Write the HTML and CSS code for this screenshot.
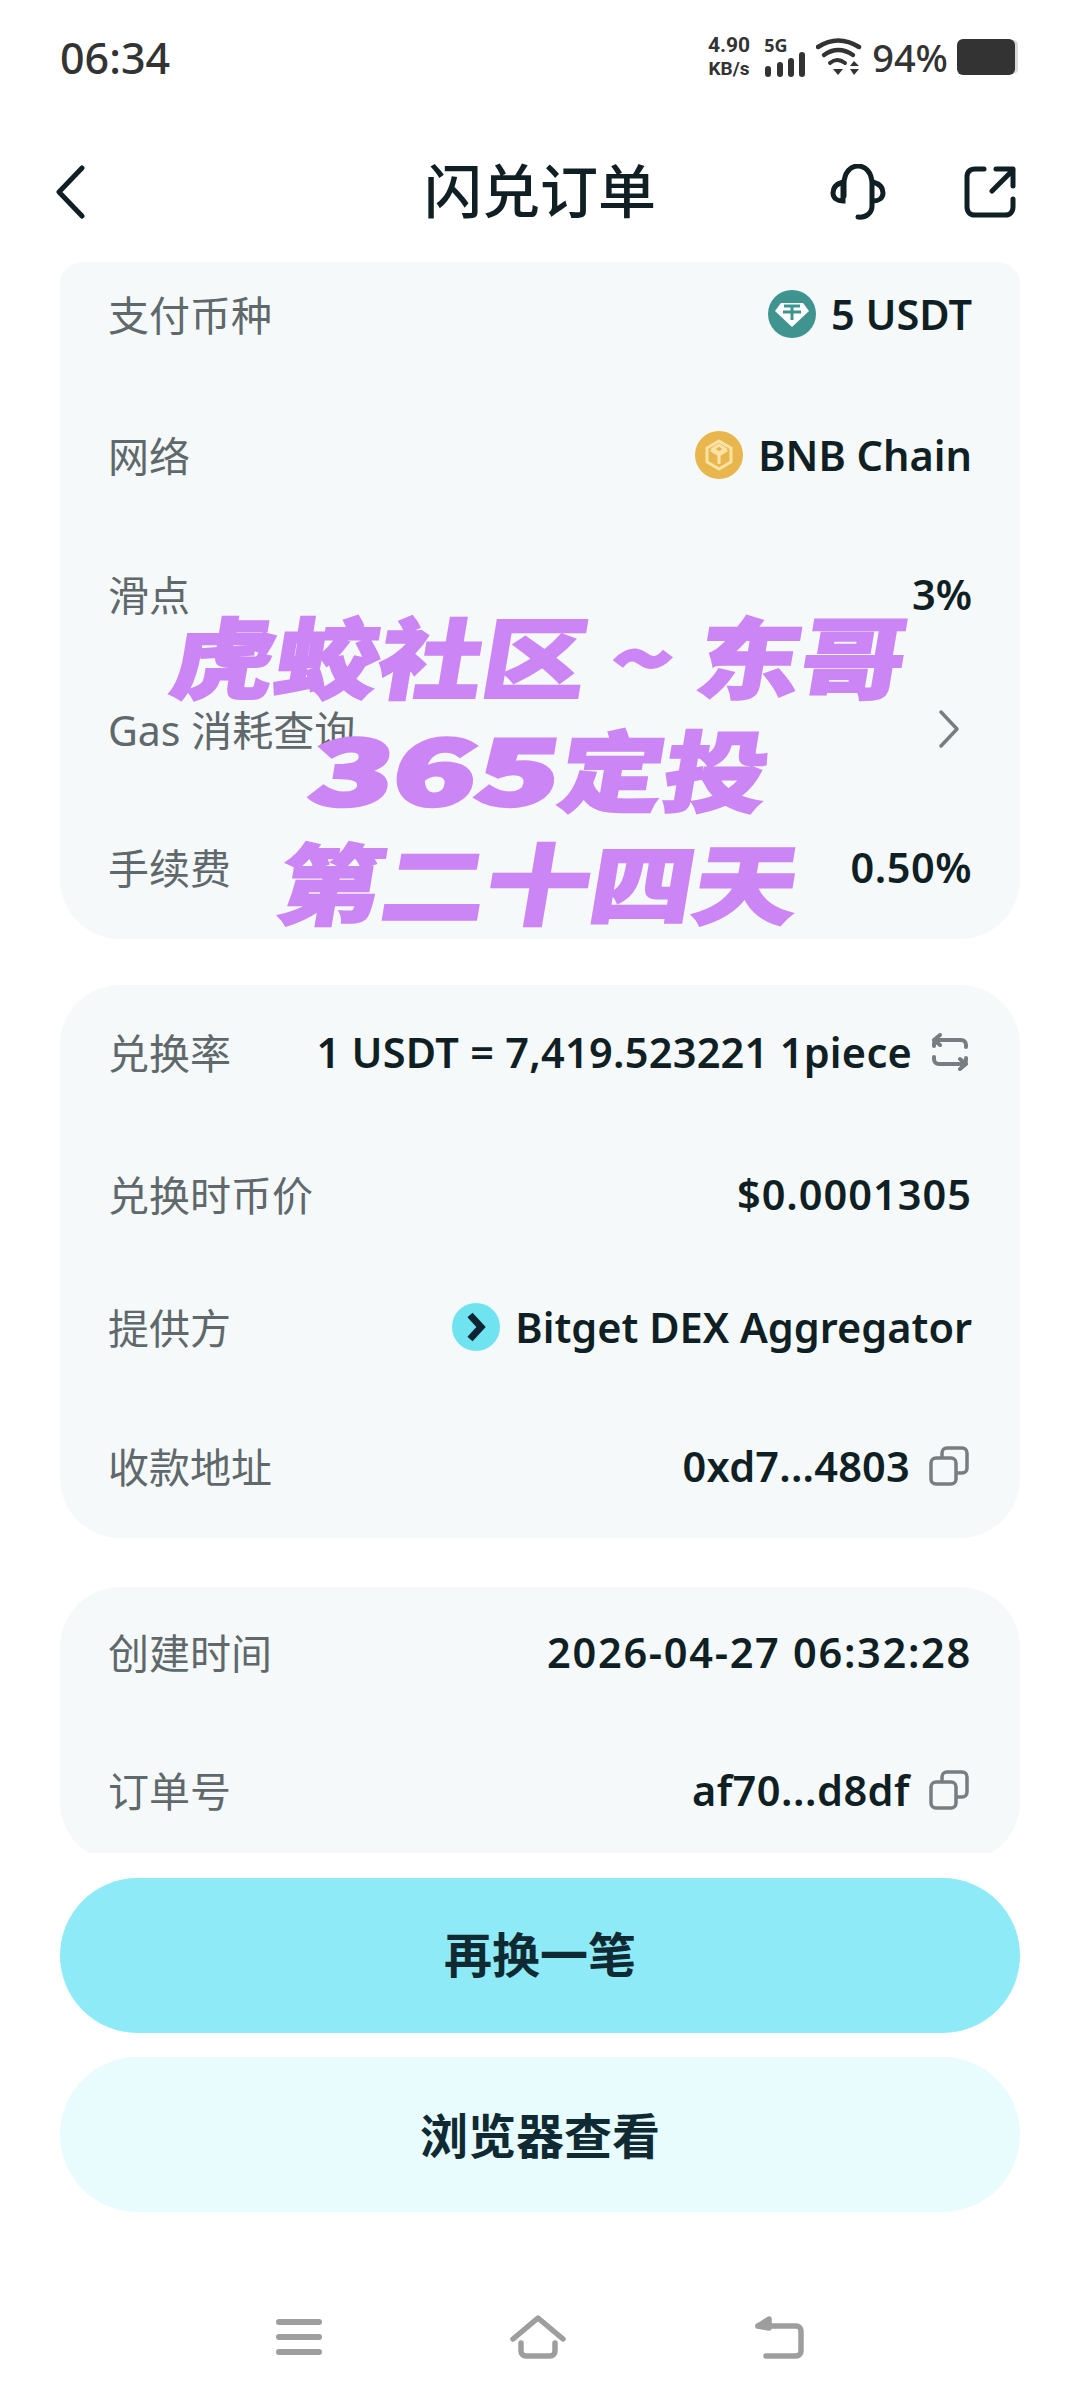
FILE: index.html
```html
<!DOCTYPE html>
<html lang="zh-CN">
<head>
    <meta charset="UTF-8">
    <meta name="viewport" content="width=device-width, initial-scale=1.0">
    <title>闪兑订单</title>
    <link rel="stylesheet" href="styles.css">
</head>
<body>
    <div class="phone">
        <div class="status-bar">
            <div class="status-time">06:34</div>
            <div class="status-icons">
                <div class="net-speed"><span>4.90</span><span class="net-unit">KB/s</span></div>
                <div class="net-signal">
                    <span class="net-type">5G</span>
                    <svg class="signal-icon" width="42" height="25" viewBox="0 0 42 25">
                        <rect x="1" y="14" width="6" height="11" rx="3"/>
                        <rect x="13" y="10" width="6" height="15" rx="3"/>
                        <rect x="24" y="6" width="6" height="19" rx="3"/>
                        <rect x="35" y="0" width="6" height="25" rx="3"/>
                    </svg>
                </div>
                <svg class="wifi-icon" width="46" height="38" viewBox="0 0 46 38" fill="none" stroke="#333" stroke-width="4.5" stroke-linecap="round">
                    <path d="M2 9Q22 -4 43 9"/>
                    <path d="M8 17Q22 7 37 17"/>
                    <path d="M14 25Q21 19 29 25" stroke-width="4"/>
                    <path d="M17 31H27L22 37Z" fill="#333" stroke="none"/>
                    <path d="M34 28L38 23L43 28Z M34 31H43L38 37Z" fill="#333" stroke="none"/>
                </svg>
                <span class="battery-text">94%</span>
                <div class="battery"></div>
            </div>
        </div>

        <div class="nav-header">
            <svg class="back-icon" width="30" height="54" viewBox="0 0 30 54" fill="none" stroke="#0f1f24" stroke-width="5" stroke-linecap="round" stroke-linejoin="round">
                <path d="M27 3L4 27L27 51"/>
            </svg>
            <h1 class="page-title">闪兑订单</h1>
            <div class="header-actions">
                <svg width="56" height="56" viewBox="0 0 56 56" fill="none" stroke="#0f1f24" stroke-width="5" stroke-linecap="round">
                    <path d="M14 32V20C14 8 21 2 28 2C35 2 42 8 42 20V42C42 49 36 54 28 53"/>
                    <path d="M13 18C6 20 3 24 3 29C3 34 7 37 13 37Z"/>
                    <path d="M43 18C50 20 53 24 53 29C53 34 49 37 43 37"/>
                </svg>
                <svg width="52" height="52" viewBox="0 0 52 52" fill="none" stroke="#0f1f24" stroke-width="5" stroke-linecap="round" stroke-linejoin="round">
                    <path d="M20 3H11C6 3 3 6 3 11V41C3 46 6 49 11 49H41C46 49 49 46 49 41V33"/>
                    <path d="M28 25L49 4M32 3H49V20"/>
                </svg>
            </div>
        </div>

        <div class="content">
            <section class="card card-first">
                <div class="row">
                    <span class="row-label">支付币种</span>
                    <span class="row-value">
                        <svg class="token-icon" width="48" height="48" viewBox="0 0 48 48">
                            <circle cx="24" cy="24" r="24" fill="#3f9490"/>
                            <path d="M13 13H35L41 21L24 37L7 21Z" fill="#fff"/>
                            <path d="M16 16H32M24 16V30M15 22H33" stroke="#3f9490" stroke-width="3" fill="none"/>
                        </svg>
                        5 USDT
                    </span>
                </div>
                <div class="row">
                    <span class="row-label">网络</span>
                    <span class="row-value">
                        <svg class="token-icon" width="48" height="48" viewBox="0 0 48 48">
                            <circle cx="24" cy="24" r="24" fill="#e8b64c"/>
                            <path d="M24 10L36 17V31L24 38L12 31V17Z" fill="none" stroke="#fbe3a8" stroke-width="3"/>
                            <path d="M16 19L24 24L32 19M24 24V33M24 14L30 18L24 22L18 18Z" fill="none" stroke="#fbe3a8" stroke-width="3"/>
                        </svg>
                        BNB Chain
                    </span>
                </div>
                <div class="row">
                    <span class="row-label">滑点</span>
                    <span class="row-value">3%</span>
                </div>
                <div class="row">
                    <span class="row-label">Gas 消耗查询</span>
                    <svg class="row-arrow" width="22" height="40" viewBox="0 0 22 40" fill="none" stroke="#777d80" stroke-width="3.5" stroke-linecap="round" stroke-linejoin="round">
                        <path d="M3 3L19 20L3 37"/>
                    </svg>
                </div>
                <div class="row">
                    <span class="row-label">手续费</span>
                    <span class="row-value value-num">0.50%</span>
                </div>
            </section>

            <section class="card card-route">
                <div class="row">
                    <span class="row-label">兑换率</span>
                    <span class="row-value value-rate">
                        1 USDT = 7,419.523221 1piece
                        <svg class="row-icon" width="38" height="38" viewBox="0 0 38 38" fill="none" stroke="#777d80" stroke-width="4" stroke-linecap="round" stroke-linejoin="round">
                            <path d="M3 13V11C3 8 5 7 7 7H30C33 7 35 9 35 12V14"/>
                            <path d="M35 25V27C35 30 33 31 31 31H8C5 31 3 29 3 26V24"/>
                            <path d="M9 2L3 7L9 12M29 26L35 31L29 36"/>
                        </svg>
                    </span>
                </div>
                <div class="row">
                    <span class="row-label">兑换时币价</span>
                    <span class="row-value value-price">$0.0001305</span>
                </div>
                <div class="row">
                    <span class="row-label">提供方</span>
                    <span class="row-value">
                        <svg class="token-icon" width="48" height="48" viewBox="0 0 48 48">
                            <circle cx="24" cy="24" r="24" fill="#6fe3f0"/>
                            <path d="M18 12L29 24L18 36" fill="none" stroke="#0f2433" stroke-width="7"/>
                        </svg>
                        Bitget DEX Aggregator
                    </span>
                </div>
                <div class="row">
                    <span class="row-label">收款地址</span>
                    <span class="row-value value-addr">
                        0xd7...4803
                        <svg class="row-icon" width="40" height="40" viewBox="0 0 40 40" fill="none" stroke="#777d80" stroke-width="3.5" stroke-linejoin="round">
                            <rect x="2" y="12" width="25" height="26" rx="5"/>
                            <path d="M13 12V7C13 4 15 2 18 2H33C36 2 38 4 38 7V22C38 25 36 27 33 27H27"/>
                        </svg>
                    </span>
                </div>
            </section>

            <section class="card card-order">
                <div class="row">
                    <span class="row-label">创建时间</span>
                    <span class="row-value value-time">2026-04-27 06:32:28</span>
                </div>
                <div class="row">
                    <span class="row-label">订单号</span>
                    <span class="row-value value-num">
                        af70...d8df
                        <svg class="row-icon" width="40" height="40" viewBox="0 0 40 40" fill="none" stroke="#777d80" stroke-width="3.5" stroke-linejoin="round">
                            <rect x="2" y="12" width="25" height="26" rx="5"/>
                            <path d="M13 12V7C13 4 15 2 18 2H33C36 2 38 4 38 7V22C38 25 36 27 33 27H27"/>
                        </svg>
                    </span>
                </div>
            </section>
        </div>

        <div class="actions">
            <div class="btn btn-primary">再换一笔</div>
            <div class="btn btn-secondary">浏览器查看</div>
        </div>

        <div class="system-nav">
            <svg width="46" height="38" viewBox="0 0 46 38" fill="none" stroke="#9e9e9e" stroke-width="6" stroke-linecap="round">
                <path d="M3 4H43M3 19H43M3 34H43"/>
            </svg>
            <svg width="56" height="44" viewBox="0 0 56 44" fill="none" stroke="#9e9e9e" stroke-width="5.5" stroke-linecap="round" stroke-linejoin="round">
                <path d="M3 24L28 3L53 24"/>
                <path d="M11 28V36C11 39 13 41 16 41H40C43 41 45 39 45 36V28"/>
            </svg>
            <svg width="50" height="44" viewBox="0 0 50 44" fill="none" stroke="#9e9e9e" stroke-width="5.5" stroke-linecap="round" stroke-linejoin="round">
                <path d="M4 11H42C45 11 47 13 47 16V36C47 39 45 41 42 41H12"/>
                <path d="M15 4L4 11L15 13Z" fill="#9e9e9e"/>
            </svg>
        </div>

        <div class="watermark">
            <div class="watermark-line">虎蛟社区 ~ 东哥</div>
            <div class="watermark-line"><span class="watermark-digits">365</span>定投</div>
            <div class="watermark-line">第二十四天</div>
        </div>
    </div>
</body>
</html>
```

FILE: styles.css
```css
* {
    margin: 0;
    padding: 0;
    box-sizing: border-box;
}

body {
    background-color: #fff;
    color: #0f1f24;
    font-family: 'Noto Sans', 'Noto Sans CJK SC', sans-serif;
    font-size: 41.5px;
}

.phone {
    position: relative;
    width: 1080px;
    height: 2400px;
    overflow: hidden;
}

/* status bar */
.status-bar {
    height: 114px;
    padding: 0 65px 0 60px;
    display: flex;
    align-items: center;
    justify-content: space-between;
    color: #333;
}

.status-time {
    font-size: 43px;
    font-weight: 500;
}

.status-icons {
    display: flex;
    align-items: center;
}

.net-speed {
    display: flex;
    flex-direction: column;
    align-items: center;
    font-family: Roboto, sans-serif;
    font-size: 21px;
    font-weight: 700;
    line-height: 24px;
    margin-right: 14px;
}

.net-unit {
    font-size: 19px;
}

.net-signal {
    display: flex;
    flex-direction: column;
    align-items: flex-start;
    margin-right: 10px;
}

.net-type {
    font-size: 18px;
    font-weight: 700;
    line-height: 14px;
}

.signal-icon {
    fill: #333;
}

.battery-text {
    font-size: 38px;
    font-weight: 500;
    margin: 0 9px 0 10px;
}

.battery {
    width: 58px;
    height: 36px;
    background-color: #333;
    border-radius: 6px;
    box-shadow: 4px 0 0 -1px #d9d9d9;
}

/* header */
.nav-header {
    height: 148px;
    padding: 8px 64px 0 55px;
    display: flex;
    align-items: center;
    position: relative;
}

.page-title {
    position: absolute;
    left: 0;
    right: 0;
    margin-bottom: 8px;
    text-align: center;
    font-size: 58px;
    font-weight: 500;
}

.header-actions {
    margin-left: auto;
    display: flex;
    align-items: center;
    gap: 78px;
}

/* cards */
.content {
    height: 1591px;
    margin: 0 60px;
    overflow: hidden;
    display: flex;
    flex-direction: column;
    gap: 46px;
}

.card {
    flex: none;
    background-color: #f5f9fa;
    border-radius: 60px;
    padding: 37px 48px 42px;
    display: flex;
    flex-direction: column;
    gap: 78px;
}

.card-first {
    border-radius: 22px 22px 60px 60px;
    padding-top: 22px;
}

.card-route {
    margin-bottom: 3px;
}

.card-order {
    padding-top: 35px;
}

/* the rows aren't evenly spaced in the app */
.card-first .row:nth-child(2) { margin-top: 3px; }
.card-first .row:nth-child(3) { margin-top: 1px; }
.card-first .row:nth-child(4) { margin-top: -3px; }
.card-route .row:nth-child(2) { margin-top: 4px; }
.card-route .row:nth-child(3) { margin-top: -5px; }
.card-route .row:nth-child(4) { margin-top: 1px; }

.row {
    height: 60px;
    display: flex;
    align-items: center;
    justify-content: space-between;
}

.row-label {
    color: #5f686b;
    font-size: 41px;
    font-weight: 400;
    margin-bottom: 2px;
}

.row-value {
    display: flex;
    align-items: center;
    font-weight: 600;
}

.value-num {
    letter-spacing: 0.5px;
}

.value-rate {
    letter-spacing: 0.25px;
}

.value-price {
    letter-spacing: 1px;
}

.value-addr {
    letter-spacing: 0.2px;
}

.value-time {
    letter-spacing: 1.7px;
}

.token-icon {
    margin-right: 15px;
}

.row-icon {
    margin-left: 19px;
    margin-right: 3px;
}

.row-arrow {
    margin-right: 12px;
}

/* bottom buttons */
.actions {
    margin: 25px 60px 0;
    display: flex;
    flex-direction: column;
    gap: 24px;
}

.btn {
    height: 155px;
    padding-bottom: 7px;
    border-radius: 78px;
    display: flex;
    align-items: center;
    justify-content: center;
    font-size: 48px;
    font-weight: 600;
    color: #0f2a33;
}

.btn-primary {
    background-color: #8deaf6;
}

.btn-secondary {
    background-color: #e8fbfd;
    padding-bottom: 3px;
}

/* android nav */
.system-nav {
    margin-top: 103px;
    padding: 0 276px;
    display: flex;
    align-items: center;
    justify-content: space-between;
}

/* sticker over the screenshot */
.watermark {
    position: absolute;
    top: 597px;
    left: 0;
    right: 0;
    text-align: center;
    color: #cc85f4;
    font-family: 'Noto Sans CJK SC', sans-serif;
    font-size: 88px;
    font-weight: 900;
    line-height: 113px;
    -webkit-text-stroke: 2px #cc85f4;
}

.watermark-line {
    transform: scaleX(1.18) skewX(-8deg);
}

.watermark-digits {
    display: inline-block;
    margin: 0 26px;
    transform: scaleX(1.31);
    -webkit-text-stroke: 4px #cc85f4;
}
```
